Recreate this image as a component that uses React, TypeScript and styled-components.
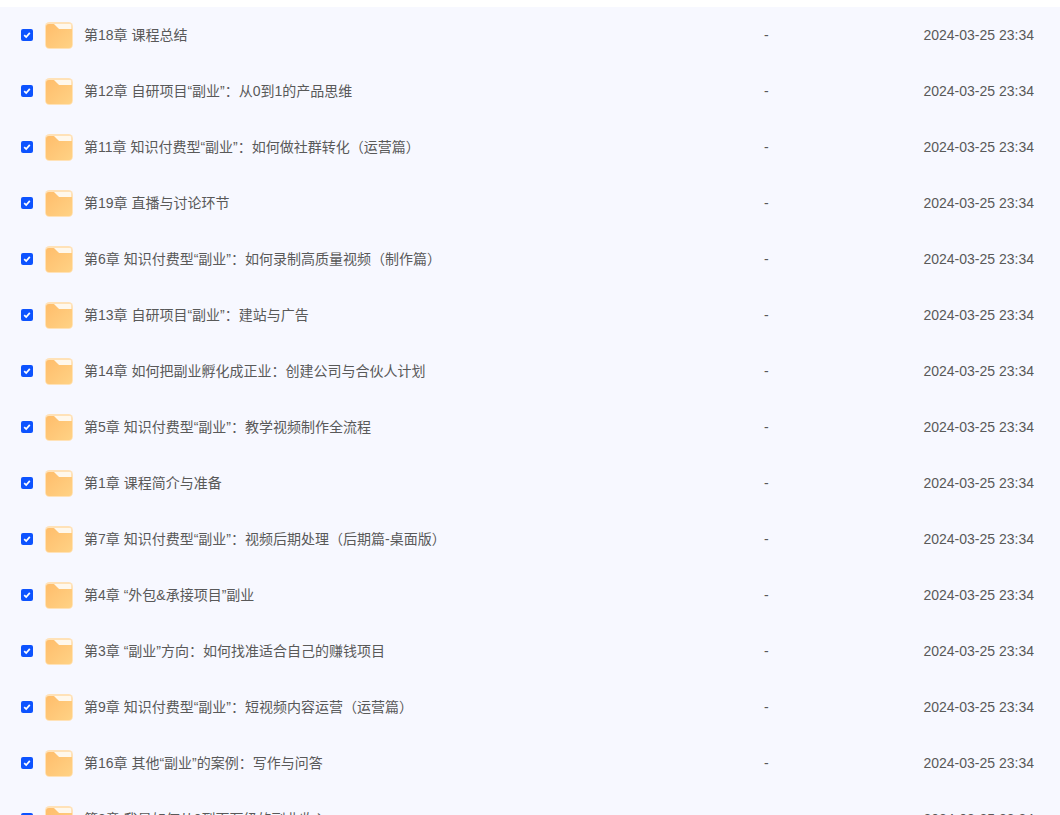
import React from "react"
import styled, { createGlobalStyle } from "styled-components"

const GlobalStyle = createGlobalStyle`
  html, body {
    margin: 0;
    padding: 0;
    height: 815px;
    overflow: hidden;
    background: #fff;
  }
`

const Page = styled.div`
  padding-top: 7px;
  height: 808px;
  overflow: hidden;
  font-family: "Liberation Sans", "Noto Sans CJK SC", sans-serif;
`

const List = styled.ul`
  margin: 0;
  padding: 0;
  list-style: none;
  background: #f7f8ff;
`

const Row = styled.li`
  display: flex;
  align-items: center;
  height: 56px;
  font-size: 14px;
  line-height: 20px;
  color: #595959;
`

const Check = styled.span`
  display: flex;
  align-items: center;
  justify-content: center;
  width: 12px;
  height: 12px;
  margin-left: 21px;
  border-radius: 2px;
  background: #0d53ff;
`

const FolderBox = styled.span`
  display: flex;
  margin-left: 12px;
`

const Name = styled.span`
  flex: 1;
  margin: -1px 0 0 11px;
  white-space: nowrap;
`

const Size = styled.span`
  width: 159px;
  margin-top: -1px;
`

const Time = styled.span`
  width: 111px;
  margin: -1px 26px 0 0;
  text-align: right;
  white-space: nowrap;
`

const rows = [
  "第18章 课程总结",
  "第12章 自研项目“副业”：从0到1的产品思维",
  "第11章 知识付费型“副业”：如何做社群转化（运营篇）",
  "第19章 直播与讨论环节",
  "第6章 知识付费型“副业”：如何录制高质量视频（制作篇）",
  "第13章 自研项目“副业”：建站与广告",
  "第14章 如何把副业孵化成正业：创建公司与合伙人计划",
  "第5章 知识付费型“副业”：教学视频制作全流程",
  "第1章 课程简介与准备",
  "第7章 知识付费型“副业”：视频后期处理（后期篇-桌面版）",
  "第4章 “外包&承接项目”副业",
  "第3章 “副业”方向：如何找准适合自己的赚钱项目",
  "第9章 知识付费型“副业”：短视频内容运营（运营篇）",
  "第16章 其他“副业”的案例：写作与问答",
  "第8章 我是如何从0到百万级的副业收入",
]

function CheckMark() {
  return (
    <Check>
      <svg width="8" height="8" viewBox="0 0 8 8" fill="none">
        <path d="M1.2 4.1 L3.2 6.1 L6.8 1.9" stroke="#fff" strokeWidth="1.7" />
      </svg>
    </Check>
  )
}

function Folder() {
  return (
    <FolderBox>
      <svg width="28" height="27" viewBox="0 0 28 27">
        <defs>
          <linearGradient id="folderFill" x1="0" y1="0" x2="1" y2="1">
            <stop offset="0" stopColor="#ffbd6b" />
            <stop offset="1" stopColor="#ffd285" />
          </linearGradient>
        </defs>
        <rect width="28" height="27" rx="4.5" fill="#ffe2b8" />
        <path d="M8 2 H25 A1 1 0 0 1 26 3 V7 H14 Z" fill="#fff8ec" />
        <path
          d="M1 5 A3 3 0 0 1 4 2 H9 L14 7 H27 V23 A3 3 0 0 1 24 26 H4 A3 3 0 0 1 1 23 V5 Z"
          fill="url(#folderFill)"
        />
      </svg>
    </FolderBox>
  )
}

export default function App() {
  return (
    <Page>
      <GlobalStyle />
      <List>
        {rows.map((name) => (
          <Row key={name}>
            <CheckMark />
            <Folder />
            <Name>{name}</Name>
            <Size>-</Size>
            <Time>2024-03-25 23:34</Time>
          </Row>
        ))}
      </List>
    </Page>
  )
}
